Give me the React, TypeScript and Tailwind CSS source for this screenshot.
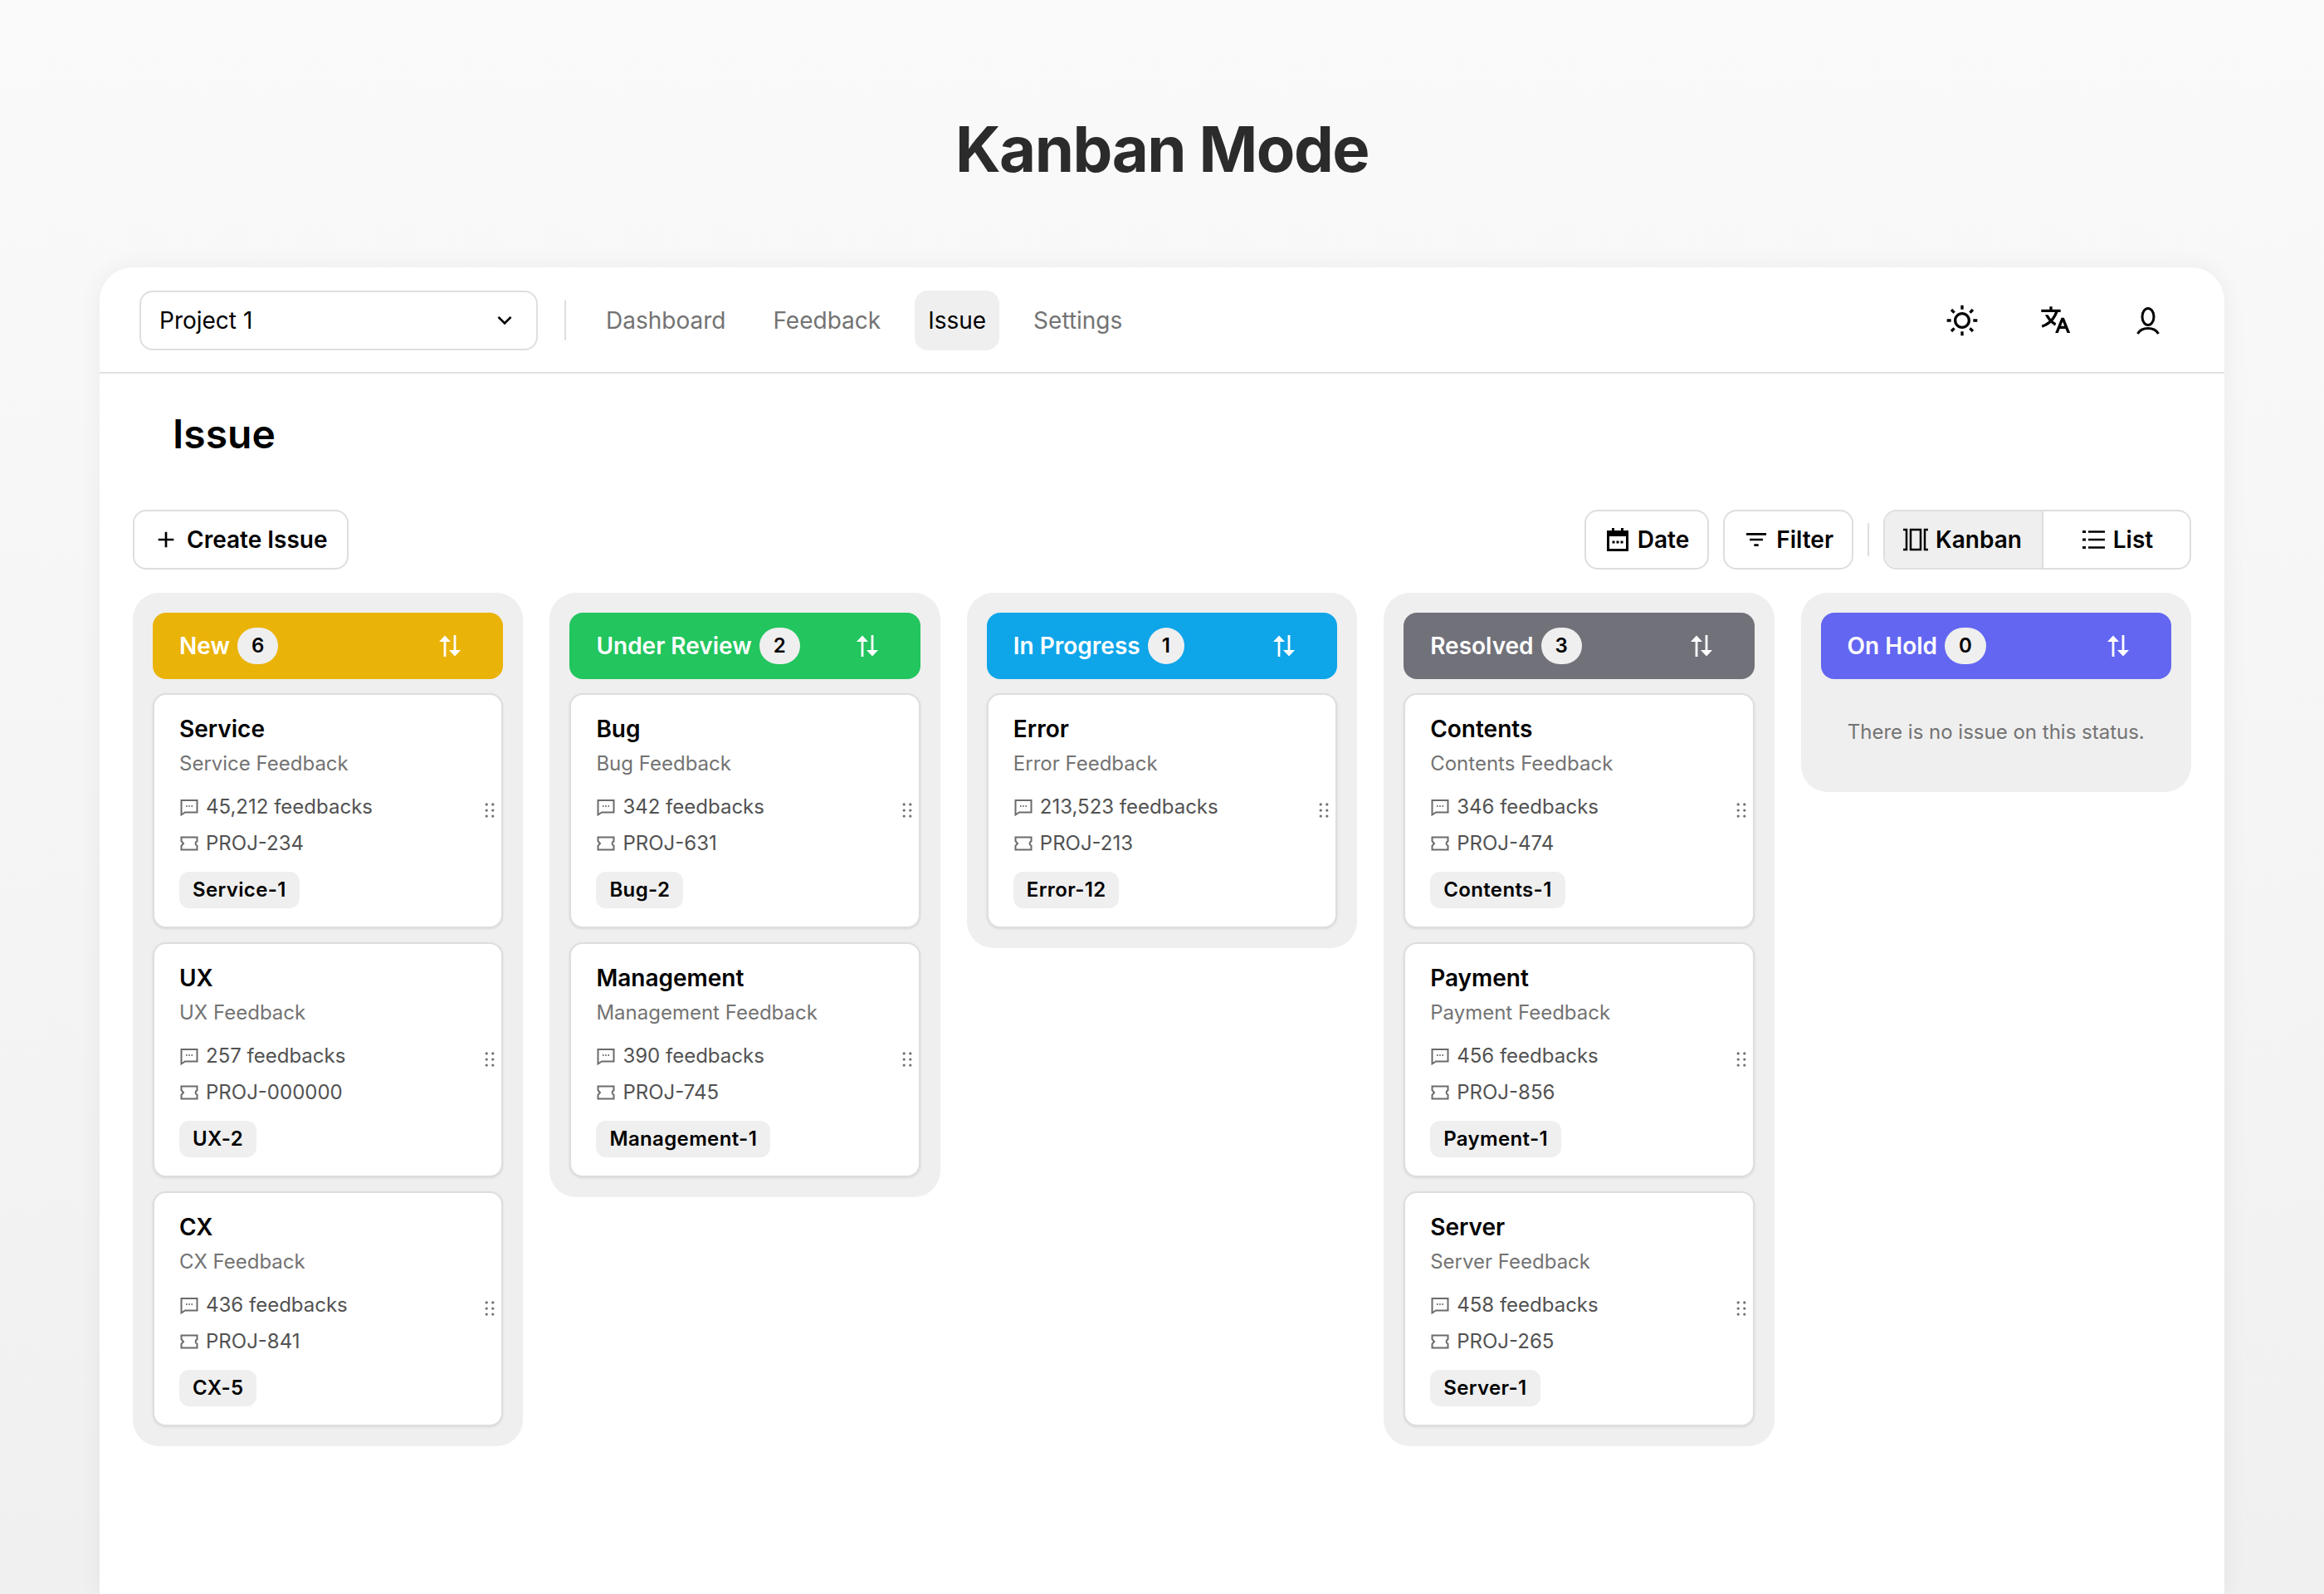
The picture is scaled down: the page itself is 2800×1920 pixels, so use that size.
import { RiAddLine, RiArrowDownSLine, RiDraggable, RiFilter3Line, RiSunLine, RiTranslate2 } from 'react-icons/ri';

interface CardData {
  title: string;
  feedbacks: string;
  proj: string;
  tag: string;
}

interface ColumnData {
  name: string;
  count: number;
  color: string;
  cards: CardData[];
}

const columns: ColumnData[] = [
  {
    name: 'New',
    count: 6,
    color: 'bg-[#eab308]',
    cards: [
      { title: 'Service', feedbacks: '45,212', proj: 'PROJ-234', tag: 'Service-1' },
      { title: 'UX', feedbacks: '257', proj: 'PROJ-000000', tag: 'UX-2' },
      { title: 'CX', feedbacks: '436', proj: 'PROJ-841', tag: 'CX-5' },
    ],
  },
  {
    name: 'Under Review',
    count: 2,
    color: 'bg-[#22c55e]',
    cards: [
      { title: 'Bug', feedbacks: '342', proj: 'PROJ-631', tag: 'Bug-2' },
      { title: 'Management', feedbacks: '390', proj: 'PROJ-745', tag: 'Management-1' },
    ],
  },
  {
    name: 'In Progress',
    count: 1,
    color: 'bg-[#0ea5e9]',
    cards: [{ title: 'Error', feedbacks: '213,523', proj: 'PROJ-213', tag: 'Error-12' }],
  },
  {
    name: 'Resolved',
    count: 3,
    color: 'bg-[#71717a]',
    cards: [
      { title: 'Contents', feedbacks: '346', proj: 'PROJ-474', tag: 'Contents-1' },
      { title: 'Payment', feedbacks: '456', proj: 'PROJ-856', tag: 'Payment-1' },
      { title: 'Server', feedbacks: '458', proj: 'PROJ-265', tag: 'Server-1' },
    ],
  },
  { name: 'On Hold', count: 0, color: 'bg-[#6366f1]', cards: [] },
];

const ChatIcon = () => (
  <svg viewBox="0 0 24 24" className="h-6 w-6 shrink-0" fill="none" stroke="#6b6b6b" strokeWidth="2">
    <path d="M2.5 4h19v14.5H7L2.5 21.5z" />
    <path d="M8 11h1.5M11.2 11h1.5M14.5 11H16" />
  </svg>
);

const TicketIcon = () => (
  <svg viewBox="0 0 24 24" className="h-6 w-6 shrink-0" fill="none" stroke="#6b6b6b" strokeWidth="2">
    <path d="M2.5 4.5h19v4.7a3 3 0 0 0 0 5.6v4.7h-19v-4.7l2.5-2.8-2.5-2.8z" />
  </svg>
);

const SortIcon = () => (
  <svg viewBox="0 0 32 32" className="h-8 w-8" fill="white">
    <path d="M10 3.5l7 7.5h-5.6v18H8.600v-18H3z" />
    <path d="M22 28.500l-7-7.500h5.600V3h2.800v18H29z" />
  </svg>
);

const UserIcon = () => (
  <svg viewBox="0 0 40 40" className="h-10 w-10" fill="none" stroke="black" strokeWidth="3">
    <ellipse cx="20" cy="15.500" rx="7" ry="10" />
    <path d="M7.500 36c2.500-4.500 7-6.500 12.500-6.500s10 2 12.500 6.500" />
  </svg>
);

const CalendarIcon = () => (
  <svg viewBox="0 0 32 32" className="h-8 w-8" fill="black">
    <path d="M9 2h3v3h8V2h3v3h6v25H3V5h6zM6 12v15h20V12z" />
    <path d="M9.500 17.500h3v3h-3zM14.500 17.500h3v3h-3zM19.500 17.500h3v3h-3z" />
  </svg>
);

const KanbanIcon = () => (
  <svg viewBox="0 0 32 32" className="h-8 w-8" fill="none" stroke="black" strokeWidth="2.500">
    <path d="M1 4h4v24H1M31 4h-4v24h4" />
    <rect x="10" y="4" width="12" height="24" />
  </svg>
);

const ListIcon = () => (
  <svg viewBox="0 0 32 32" className="h-8 w-8" fill="black">
    <path d="M3 5h4v3H3zM3 14.500h4v3H3zM3 24h4v3H3zM10 5.200h20v2.600H10zM10 14.700h20v2.600H10zM10 24.200h20v2.600H10z" />
  </svg>
);

const Card = ({ card }: { card: CardData }) => (
  <div className="relative h-[283px] rounded-[16px] border-2 border-[#dedede] bg-white pl-[30px] pt-[21px] shadow-[0_1px_3px_rgba(0,0,0,0.1)]">
    <div className="h-[39px] text-[28px] font-semibold leading-[40px] text-black">{card.title}</div>
    <div className="h-[46px] text-[24px] leading-[46px] text-[#737373]">{card.title} Feedback</div>
    <div className="mt-[7px] flex h-[44px] items-center gap-[8px] text-[24px] text-[#525252]">
      <ChatIcon />
      <span>{card.feedbacks} feedbacks</span>
    </div>
    <div className="flex h-[44px] items-center gap-[8px] text-[24px] text-[#525252]">
      <TicketIcon />
      <span>{card.proj}</span>
    </div>
    <div className="mt-[12px] inline-flex h-[44px] items-center rounded-[12px] bg-[#efefef] px-[16px] text-[24px] font-semibold tracking-[0.015em] text-black">
      {card.tag}
    </div>
    <RiDraggable className="absolute right-[1px] top-[126px] h-[26px] w-[26px] text-[#737373]" />
  </div>
);

const Column = ({ column }: { column: ColumnData }) => (
  <div className="flex flex-col gap-[17px] rounded-[32px] bg-[#efefef] p-[24px]">
    <div className={`flex h-[80px] items-center justify-between rounded-[16px] pl-[32px] pr-[48px] ${column.color}`}>
      <div className="flex items-center gap-[9px]">
        <span className="text-[28px] font-semibold text-white">{column.name}</span>
        <span className="flex h-[44px] items-center justify-center rounded-full bg-[#efefef] px-[17px] text-[24px] font-semibold text-black">
          {column.count}
        </span>
      </div>
      <SortIcon />
    </div>
    {column.cards.map((card) => (
      <Card key={card.title} card={card} />
    ))}
    {column.cards.length === 0 && (
      <div className="flex h-[95px] items-center justify-center pb-[2px] text-[24px] text-[#737373]">
        There is no issue on this status.
      </div>
    )}
  </div>
);

const App = () => (
  <div className="h-[1920px] overflow-hidden bg-gradient-to-b from-[#fafafa] to-[#f0f0f0] [font-family:Inter,sans-serif] [font-optical-sizing:none]">
    <h1 className="h-[322px] pt-[127px] text-center text-[76px] font-bold leading-[104px] tracking-[-0.02em] text-[#2b2b2b]">
      Kanban Mode
    </h1>
    <div className="mx-[120px] h-[1598px] rounded-t-[40px] bg-white shadow-[0_0_30px_rgba(0,0,0,0.06)]">
      <div className="flex h-[128px] items-center justify-between border-b-2 border-[#e2e2e2] pl-[48px] pr-[72px] pt-[2px]">
        <div className="flex items-center">
          <div className="flex h-[72px] w-[480px] items-center justify-between rounded-[16px] border-2 border-[#dedede] pl-[22px] pr-[22px] text-[28px] text-black">
            Project 1
            <RiArrowDownSLine className="h-8 w-8" />
          </div>
          <div className="ml-[32px] mr-[32px] h-[48px] w-[2px] bg-[#dedede]" />
          <nav className="flex items-center gap-[25px] text-[28px] text-[#737373]">
            <span className="px-[16px]">Dashboard</span>
            <span className="px-[16px]">Feedback</span>
            <span className="flex h-[72px] items-center rounded-[16px] bg-[#efefef] px-[16px] text-black">Issue</span>
            <span className="px-[16px]">Settings</span>
          </nav>
        </div>
        <div className="flex items-center gap-[72px]">
          <RiSunLine className="h-10 w-10" />
          <RiTranslate2 className="h-10 w-10" />
          <UserIcon />
        </div>
      </div>
      <h2 className="h-[164px] pl-[88px] pt-[44px] text-[48px] font-semibold leading-[58px] text-black">Issue</h2>
      <div className="flex items-center justify-between pl-[40px] pr-[40px]">
        <button type="button" className="flex h-[72px] items-center gap-[9px] rounded-[16px] border-2 border-[#dedede] pl-[22px] pr-[24px] text-[28px] font-semibold text-black">
          <RiAddLine className="h-8 w-8" />
          Create Issue
        </button>
        <div className="flex items-center">
          <button type="button" className="flex h-[72px] items-center gap-[8px] rounded-[16px] border-2 border-[#dedede] px-[22px] text-[28px] font-semibold text-black">
            <CalendarIcon />
            Date
          </button>
          <button type="button" className="ml-[17px] flex h-[72px] items-center gap-[8px] rounded-[16px] border-2 border-[#dedede] px-[22px] text-[28px] font-semibold text-black">
            <RiFilter3Line className="h-8 w-8" />
            Filter
          </button>
          <div className="mx-[17px] h-[40px] w-[2px] bg-[#dedede]" />
          <div className="flex h-[72px] overflow-hidden rounded-[16px] border-2 border-[#dedede] text-[28px] font-semibold text-black">
            <div className="flex w-[191px] items-center justify-center gap-[8px] border-r-2 border-[#dedede] bg-[#efefef] pr-[3px]">
              <KanbanIcon />
              Kanban
            </div>
            <div className="flex w-[176px] items-center justify-center gap-[8px]">
              <ListIcon />
              List
            </div>
          </div>
        </div>
      </div>
      <div className="mt-[28px] grid grid-cols-5 items-start gap-[32px] pl-[40px] pr-[40px]">
        {columns.map((column) => (
          <Column key={column.name} column={column} />
        ))}
      </div>
    </div>
  </div>
);

export default App;
